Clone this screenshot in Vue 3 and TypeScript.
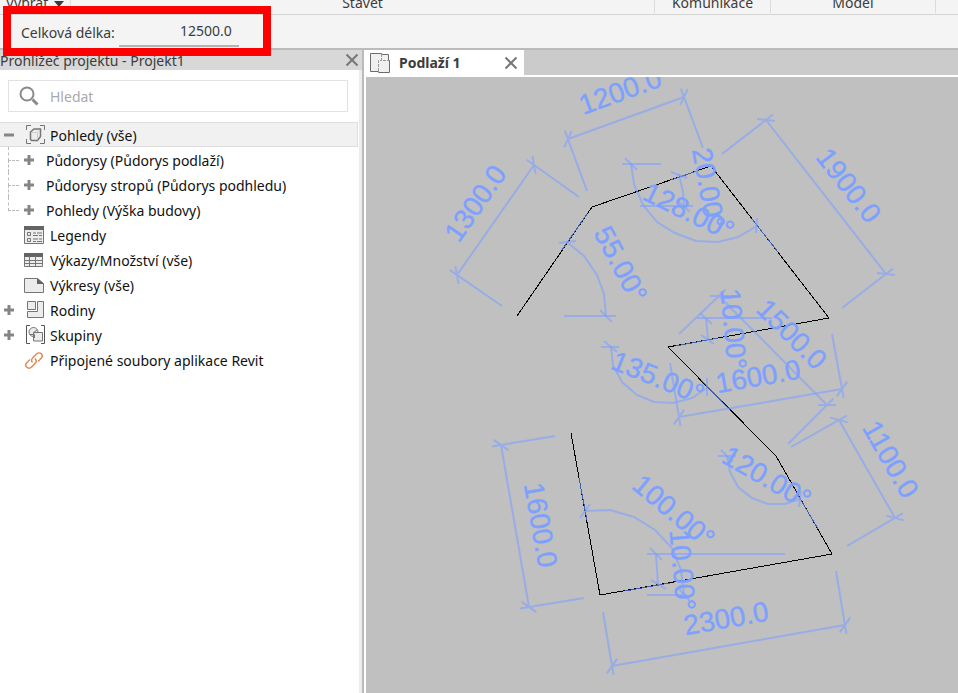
<script setup lang="ts">
import { ref } from 'vue'

type Point = [number, number]

interface LinearDimension {
  label: string
  a: Point
  b: Point
  extA: Point
  extB: Point
  text: Point
  angle: number
}

interface AngularDimension {
  label: string
  arc: string
  lines: [number, number, number, number][]
  overlap: [number, number, number, number]
  text: Point
  angle: number
}

interface TreeItem {
  id: string
  label: string
  icon: string
  toggle: '' | '+' | '-'
  children?: string[]
}

const totalLength = ref('12500.0')
const query = ref('')

const tree: TreeItem[] = [
  {
    id: 'views',
    label: 'Pohledy (vše)',
    icon: 'views',
    toggle: '-',
    children: ['Půdorysy (Půdorys podlaží)', 'Půdorysy stropů (Půdorys podhledu)', 'Pohledy (Výška budovy)'],
  },
  { id: 'legends', label: 'Legendy', icon: 'legend', toggle: '' },
  { id: 'schedules', label: 'Výkazy/Množství (vše)', icon: 'schedule', toggle: '' },
  { id: 'sheets', label: 'Výkresy (vše)', icon: 'sheet', toggle: '' },
  { id: 'families', label: 'Rodiny', icon: 'family', toggle: '+' },
  { id: 'groups', label: 'Skupiny', icon: 'group', toggle: '+' },
  { id: 'links', label: 'Připojené soubory aplikace Revit', icon: 'link', toggle: '' },
]

const outline = '517,316 592,207 711,166 829,318 668,347 776,456 832,554 600,595 571,433'

const linear: LinearDimension[] = [
  { label: '1300.0', a: [457, 275], b: [534, 165], extA: [502, 306], extB: [579, 197], text: [475, 203], angle: -55 },
  { label: '1200.0', a: [568, 139], b: [684, 97], extA: [587, 191], extB: [703, 148], text: [620, 91], angle: -20 },
  { label: '1900.0', a: [766, 120], b: [886, 274], extA: [722, 154], extB: [842, 308], text: [849, 185], angle: 52 },
  { label: '1500.0', a: [719, 296], b: [827, 405], extA: [679, 334], extB: [788, 444], text: [792, 334], angle: 45 },
  { label: '1600.0', a: [679, 417], b: [842, 389], extA: [670, 363], extB: [832, 334], text: [758, 376], angle: -10 },
  { label: '1100.0', a: [839, 420], b: [895, 518], extA: [791, 447], extB: [847, 546], text: [891, 459], angle: 60 },
  { label: '2300.0', a: [612, 666], b: [845, 625], extA: [603, 612], extB: [836, 571], text: [726, 618], angle: -10 },
  { label: '1600.0', a: [501, 445], b: [529, 607], extA: [555, 436], extB: [584, 598], text: [541, 525], angle: 80 },
]

const angular: AngularDimension[] = [
  {
    label: '55.00°',
    arc: '567,242 584,256 597,275 604,294 606,316',
    lines: [[564, 316, 616, 316], [559, 243, 576, 241], [600, 310, 612, 322]],
    overlap: [562, 250, 587, 214],
    text: [621, 264],
    angle: 62,
  },
  {
    label: '128.00°',
    arc: '631,164 634,184 643,205 657,222 675,233 696,241 718,242 738,237 757,226',
    lines: [[622, 164, 661, 164], [625, 158, 637, 170], [757, 218, 756, 233]],
    overlap: [752, 219, 778, 252],
    text: [689, 211],
    angle: 26,
  },
  {
    label: '20.00°',
    arc: '679,174 683,192 684,206',
    lines: [[640, 206, 693, 206], [671, 172, 687, 178], [679, 202, 690, 212]],
    overlap: [671, 180, 697, 171],
    text: [709, 188],
    angle: 80,
  },
  {
    label: '10.00°',
    arc: '706,318 708,339',
    lines: [[697, 318, 772, 318], [700, 313, 712, 324], [701, 335, 714, 344]],
    overlap: [676, 346, 718, 338],
    text: [734, 329],
    angle: 85,
  },
  {
    label: '135.00°',
    arc: '611,347 613,365 622,382 637,395 654,402 673,403 692,398 707,388',
    lines: [[601, 347, 619, 347], [604, 341, 617, 352], [707, 378, 707, 396]],
    overlap: [701, 380, 730, 410],
    text: [658, 377],
    angle: 22,
  },
  {
    label: '120.00°',
    arc: '727,456 730,472 738,487 752,498 768,504 785,504 800,499',
    lines: [[718, 456, 736, 456], [721, 450, 733, 462], [801, 491, 799, 507]],
    overlap: [798, 495, 818, 529],
    text: [767, 477],
    angle: 30,
  },
  {
    label: '100.00°',
    arc: '585,511 610,510 634,517 655,530 672,548 681,570 684,595',
    lines: [[647, 595, 687, 595], [580, 518, 590, 504], [679, 589, 690, 601]],
    overlap: [579, 478, 587, 520],
    text: [674, 511],
    angle: 40,
  },
  {
    label: '10.00°',
    arc: '656,554 657,570 658,585',
    lines: [[647, 554, 785, 554], [650, 548, 662, 560], [651, 580, 666, 589]],
    overlap: [625, 591, 670, 583],
    text: [683, 570],
    angle: 85,
  },
]

/** Witness line that runs a little past the dimension line. */
function witness(end: Point, far: Point): string {
  const length = Math.hypot(end[0] - far[0], end[1] - far[1])
  const x = end[0] + ((end[0] - far[0]) / length) * 9
  const y = end[1] + ((end[1] - far[1]) / length) * 9
  return `M${far[0]} ${far[1]}L${x} ${y}`
}

/** Slanted tick at 45 degrees to the dimension line. */
function tick(at: Point, a: Point, b: Point): string {
  const direction = Math.atan2(b[1] - a[1], b[0] - a[0]) - Math.PI / 4
  const dx = Math.cos(direction) * 9
  const dy = Math.sin(direction) * 9
  return `M${at[0] - dx} ${at[1] - dy}L${at[0] + dx} ${at[1] + dy}`
}

function dimensionPath(d: LinearDimension): string {
  return [
    `M${d.a[0]} ${d.a[1]}L${d.b[0]} ${d.b[1]}`,
    witness(d.a, d.extA),
    witness(d.b, d.extB),
    tick(d.a, d.a, d.b),
    tick(d.b, d.a, d.b),
  ].join('')
}

function place(text: Point, angle: number): string {
  return `translate(${text[0]} ${text[1]}) rotate(${angle})`
}
</script>

<template>
  <div class="app">
    <nav class="ribbon" aria-label="Panely">
      <button class="panel" type="button">
        Vybrat
        <svg class="caret" viewBox="0 0 10 6" aria-hidden="true"><path d="M0 0h10L5 6z" /></svg>
      </button>
      <span class="panel">Stavět</span>
      <span class="panel">Komunikace</span>
      <span class="panel">Model</span>
    </nav>

    <div class="options">
      <label for="total">Celková délka:</label>
      <input id="total" v-model="totalLength" type="text" />
      <div class="highlight"></div>
    </div>

    <div class="workspace">
      <aside class="browser">
        <header class="browser-head">
          <span>Prohlížeč projektu - Projekt1</span>
          <button class="close" type="button" aria-label="Zavřít">
            <svg viewBox="0 0 14 14"><path d="M1.500 1.500l11 11M12.500 1.500l-11 11" /></svg>
          </button>
        </header>

        <div class="search">
          <svg viewBox="0 0 20 20" aria-hidden="true">
            <circle cx="8" cy="8" r="6.500" />
            <path class="handle" d="M13.500 13.500l5 5" />
          </svg>
          <input v-model="query" type="search" placeholder="Hledat" aria-label="Hledat" />
        </div>

        <ul class="tree">
          <li v-for="item in tree" :key="item.id">
            <div class="row" :class="{ selected: item.id === 'views', wide: item.toggle !== '' }">
              <button v-if="item.toggle" class="toggle" type="button" :aria-label="item.label">
                <svg viewBox="0 0 10 10">
                  <path d="M0 5h10" />
                  <path v-if="item.toggle === '+'" d="M5 0v10" />
                </svg>
              </button>
              <span v-else class="toggle"></span>

              <svg class="icon" viewBox="0 0 20 20" aria-hidden="true">
                <g v-if="item.icon === 'views'" class="line">
                  <path d="M.5 5V.5H5M14 .5h4.500V5M18.500 14v4.500H14M5 18.500H.5V14" />
                  <path class="soft cube" d="M4.500 7L8 4h6.500v7.500l-3 4H5.500l-1-1z" />
                  <path class="thin" d="M5.500 7.500h6v7M11.500 7.500L14 5" />
                </g>
                <g v-else-if="item.icon === 'legend'">
                  <path class="line soft" d="M.5 1.500h19v17H.5z" />
                  <path class="fill" d="M0 1h20v4H0z" />
                  <path class="line" d="M3.500 7.500h3v3h-3zM3.500 13.500h3v3h-3zM9 8h3M13 8h5M9 10.500h5M15 10.500h3M9 14h5M15 14h3M9 16.500h3M13 16.500h5" />
                </g>
                <g v-else-if="item.icon === 'schedule'">
                  <path class="line soft" d="M.5 3.500h18v13H.5z" />
                  <path class="fill" d="M0 3h19v4H0z" />
                  <path class="line" d="M5.500 6v11M11.500 6v11M0 10.500h19M0 13.500h19" />
                </g>
                <g v-else-if="item.icon === 'sheet'">
                  <path class="line soft" d="M.5 3.500h13l6 5v9H.5z" />
                  <path class="fill" d="M13 3l7 6h-7z" />
                </g>
                <g v-else-if="item.icon === 'family'" class="line">
                  <path class="soft" d="M1.500 1.500h8v8h-8z" />
                  <path class="soft" d="M11.500 1.500h6v16h-16v-6h10z" />
                </g>
                <g v-else-if="item.icon === 'group'" class="line">
                  <path class="dark" d="M4 .5H.5v18H4M15 .5h3.500v18H15" />
                  <circle class="soft" cx="7.500" cy="7" r="4.500" />
                  <path class="soft" d="M7.500 7.500h9V16h-9z" />
                  <path d="M3.500 9.500h5V13M7.500 7.500L11 5" />
                </g>
                <g v-else class="link">
                  <path d="M8.500 12.500c-1.500-1.500-1-3.500.5-5L12.500 4c1.500-1.500 3.500-1.500 5 0s1 3-.5 4.500L14 11.500" />
                  <path d="M11 8.500c1.500 1.500 1.500 3.500 0 5L7.500 17c-1.500 1.500-3.500 1.500-5 0s-1-3 .5-4.500L6 9.500" />
                </g>
              </svg>
              <span class="name">{{ item.label }}</span>
            </div>

            <ul v-if="item.children" class="branch">
              <li v-for="child in item.children" :key="child" class="row">
                <button class="toggle" type="button" :aria-label="child">
                  <svg viewBox="0 0 10 10"><path d="M0 5h10M5 0v10" /></svg>
                </button>
                <span class="name">{{ child }}</span>
              </li>
            </ul>
          </li>
        </ul>
      </aside>

      <main class="view">
        <div class="tabs">
          <div class="tab">
            <svg class="plan" viewBox="0 0 20 20" aria-hidden="true">
              <path class="sheet" d="M.5.500h11v1h7v6h1v12H8.500v-1h-8z" />
              <path class="dash" d="M11.500 1v6.500H18M8.500 18V7.500h3" />
            </svg>
            <span>Podlaží 1</span>
            <button class="close" type="button" aria-label="Zavřít kartu">
              <svg viewBox="0 0 14 14"><path d="M1.500 1.500l11 11M12.500 1.500l-11 11" /></svg>
            </button>
          </div>
        </div>

        <div class="canvas">
          <svg class="drawing" viewBox="366 77 592 616" role="img" aria-label="Podlaží 1">
            <polyline class="wall" :points="outline" />
            <g v-for="(d, i) in angular" :key="'a' + i">
              <line class="overlap" :x1="d.overlap[0]" :y1="d.overlap[1]" :x2="d.overlap[2]" :y2="d.overlap[3]" />
              <polyline class="dim" :points="d.arc" />
              <line v-for="(l, n) in d.lines" :key="n" class="dim" :x1="l[0]" :y1="l[1]" :x2="l[2]" :y2="l[3]" />
              <text y="10" :transform="place(d.text, d.angle)">{{ d.label }}</text>
            </g>
            <g v-for="(d, i) in linear" :key="'l' + i">
              <path class="dim" :d="dimensionPath(d)" />
              <text y="10" :transform="place(d.text, d.angle)">{{ d.label }}</text>
            </g>
          </svg>
        </div>
      </main>
    </div>
  </div>
</template>

<style>
body {
  margin: 0;
  overflow: hidden;
}
</style>

<style scoped>
.app {
  display: flex;
  flex-direction: column;
  height: 100vh;
  background: #f4f4f4;
  color: #3c3c3c;
  font: 14px/20px "Noto Sans", "Open Sans", sans-serif;
}

button,
input {
  box-sizing: border-box;
  margin: 0;
  padding: 0;
  border: 0;
  border-radius: 0;
  background: none;
  color: inherit;
  font: inherit;
  outline: none;
}

svg {
  display: block;
  fill: none;
}

ul {
  margin: 0;
  padding: 0;
  list-style: none;
}

/* ribbon */
.ribbon {
  display: grid;
  grid-template-columns: 71px 1fr 116px 165px 22px;
  flex: none;
  height: 14px;
  overflow: hidden;
  border-bottom: 1px solid #d4d4d4;
}

.panel {
  display: flex;
  justify-content: center;
  align-items: flex-end;
  gap: 6px;
  height: 13px;
  border-right: 1px solid #dcdcdc;
}

.caret {
  width: 10px;
  height: 6px;
  margin-bottom: 6px;
  fill: #3c3c3c;
}

/* options bar */
.options {
  position: relative;
  display: flex;
  flex: none;
  gap: 4px;
  height: 33px;
  padding-left: 21px;
  border-bottom: 2px solid #bbb;
}

.options label {
  padding-top: 8px;
}

.options input {
  width: 120px;
  height: 32px;
  padding: 0 7px 0 0;
  border-bottom: 2px solid #b4b4b4;
  text-align: right;
}

.highlight {
  position: absolute;
  left: 3px;
  top: -9px;
  z-index: 2;
  box-sizing: border-box;
  width: 268px;
  height: 50px;
  border: 8px solid #fe0000;
  pointer-events: none;
}

.workspace {
  display: flex;
  flex: 1;
  min-height: 0;
}

/* project browser */
.browser {
  box-sizing: border-box;
  flex: none;
  width: 364px;
  border-right: 2px solid #bbb;
  background: linear-gradient(to left, #ececec 3px, #fff 3px);
  color: #111;
}

.browser-head {
  display: flex;
  justify-content: space-between;
  align-items: center;
  height: 20px;
  padding-right: 3px;
  background: #d8d8d8;
  color: #3c3c3c;
}

.browser-head span {
  padding-top: 2px;
}

.close svg {
  width: 14px;
  height: 14px;
  stroke: #777;
  stroke-width: 2;
}

.search {
  display: flex;
  align-items: center;
  gap: 11px;
  height: 30px;
  margin: 10px 14px 10px 8px;
  padding-left: 10px;
  border: 1px solid #e2e2e2;
}

.search svg {
  width: 20px;
  height: 20px;
  stroke: #8a8a8a;
  stroke-width: 2;
}

.search .handle {
  stroke-width: 3;
}

.search input {
  flex: 1;
  min-width: 0;
  padding-top: 2px;
}

.search input::placeholder {
  color: #aaa;
  opacity: 1;
}

.row {
  box-sizing: border-box;
  display: flex;
  align-items: center;
  gap: 6px;
  height: 25px;
  padding-left: 4px;
}

.row.wide {
  gap: 5px;
}

.row.wide .icon {
  margin-left: 3px;
}

.row.selected {
  margin-right: 4px;
  border: 1px solid #dedede;
  border-left: 0;
  background: #f1f1f1;
}

.name {
  padding-top: 2px;
}

.toggle {
  flex: none;
  width: 14px;
}

.toggle svg {
  width: 10px;
  height: 10px;
  stroke: #858585;
  stroke-width: 3;
}

.icon {
  flex: none;
  width: 20px;
  height: 20px;
}

.row.wide .name {
  margin-left: -1px;
}

.line {
  stroke: #757575;
}

.soft {
  fill: #ececec;
}

.cube {
  stroke-width: 1.5;
}

.thin {
  stroke: #ccc;
}

.dark {
  stroke: #555;
}

.fill {
  fill: #646464;
}

.link {
  stroke: #e08a55;
  stroke-width: 1.5;
}

.branch .row {
  position: relative;
  gap: 8px;
  padding-left: 24px;
}

.branch .row::before {
  content: "";
  position: absolute;
  left: 8px;
  top: 0;
  width: 10px;
  height: 13px;
  border: 0 dashed #bbb;
  border-width: 0 0 1px 1px;
}

.branch .row:not(:last-child)::after {
  content: "";
  position: absolute;
  left: 8px;
  top: 13px;
  height: 12px;
  border-left: 1px dashed #bbb;
}

/* drawing view */
.view {
  display: flex;
  flex: 1;
  flex-direction: column;
  min-width: 0;
  background: #fff;
}

.tabs {
  flex: none;
  height: 25px;
  background: linear-gradient(to right, #fff 2px, #cbcbcb 2px);
}

.tab {
  box-sizing: border-box;
  display: flex;
  align-items: center;
  width: 160px;
  height: 25px;
  padding: 0 6px;
  background: #fff;
  font-weight: 700;
}

.tab span {
  flex: 1;
  padding-left: 9px;
}

.plan {
  width: 20px;
  height: 20px;
}

.plan .sheet {
  fill: #f0f0f0;
  stroke: #6c6c6c;
}

.plan .dash {
  stroke: #999;
  stroke-dasharray: 3 1;
}

.canvas {
  flex: 1;
  min-height: 0;
  margin: 2px 0 0 2px;
  overflow: hidden;
  background: #c0c0c0;
}

.drawing {
  width: 100%;
}

.drawing text {
  fill: #7da0ff;
  stroke: #7da0ff;
  stroke-width: 0.4;
  font: 28px "Liberation Sans", Arial, sans-serif;
  text-anchor: middle;
}

.wall {
  stroke: #000;
  shape-rendering: crispEdges;
}

.overlap {
  stroke: #3f5fae;
  stroke-width: 1;
  shape-rendering: crispEdges;
}

.dim {
  stroke: #7da0ff;
  stroke-opacity: 0.6;
  stroke-width: 2;
}
</style>
